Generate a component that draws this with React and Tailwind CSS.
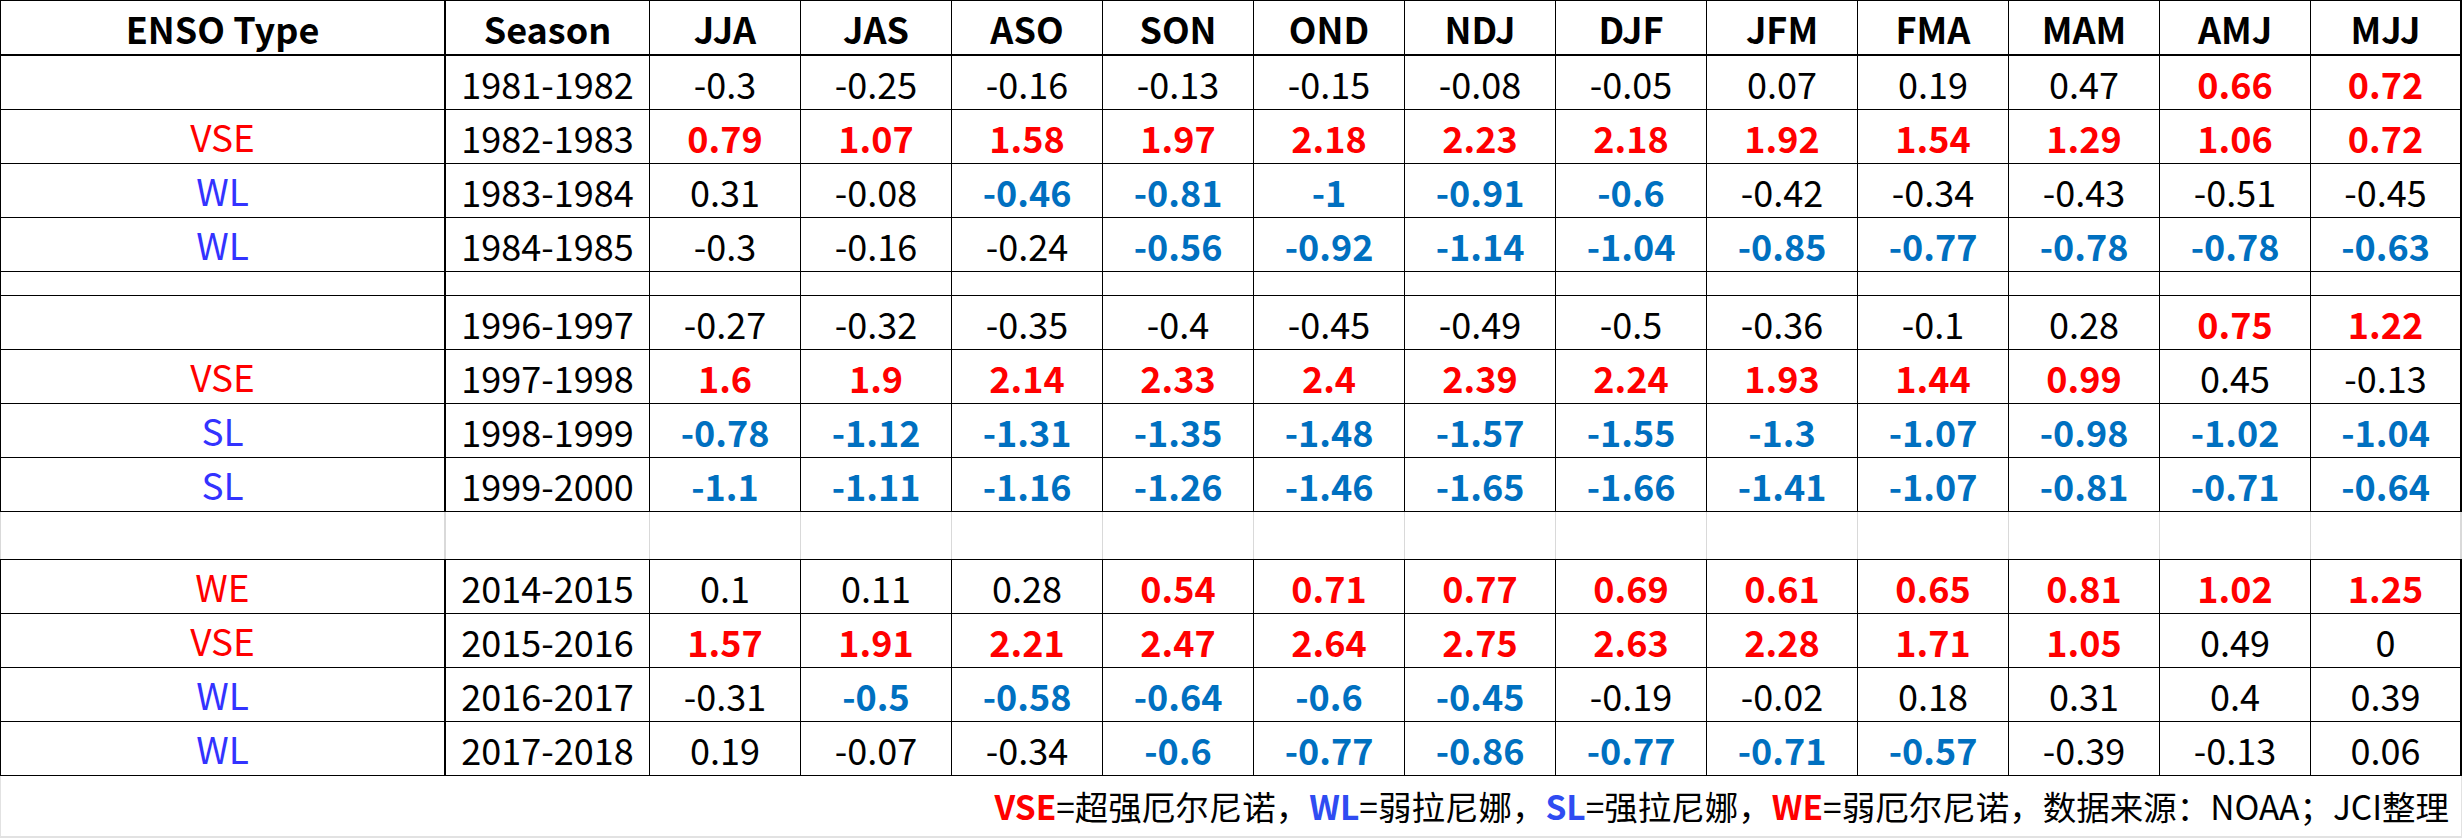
import React from "react";

const months = ["JJA", "JAS", "ASO", "SON", "OND", "NDJ", "DJF", "JFM", "FMA", "MAM", "AMJ", "MJJ"];

// k = black, r = red (bold), b = blue (bold)
const rows = [
  { type: "", season: "1981-1982", v: "-0.3 -0.25 -0.16 -0.13 -0.15 -0.08 -0.05 0.07 0.19 0.47 0.66 0.72", c: "kkkkkkkkkkrr" },
  { type: "VSE", season: "1982-1983", v: "0.79 1.07 1.58 1.97 2.18 2.23 2.18 1.92 1.54 1.29 1.06 0.72", c: "rrrrrrrrrrrr" },
  { type: "WL", season: "1983-1984", v: "0.31 -0.08 -0.46 -0.81 -1 -0.91 -0.6 -0.42 -0.34 -0.43 -0.51 -0.45", c: "kkbbbbbkkkkk" },
  { type: "WL", season: "1984-1985", v: "-0.3 -0.16 -0.24 -0.56 -0.92 -1.14 -1.04 -0.85 -0.77 -0.78 -0.78 -0.63", c: "kkkbbbbbbbbb" },
  "spacer",
  { type: "", season: "1996-1997", v: "-0.27 -0.32 -0.35 -0.4 -0.45 -0.49 -0.5 -0.36 -0.1 0.28 0.75 1.22", c: "kkkkkkkkkkrr" },
  { type: "VSE", season: "1997-1998", v: "1.6 1.9 2.14 2.33 2.4 2.39 2.24 1.93 1.44 0.99 0.45 -0.13", c: "rrrrrrrrrrkk" },
  { type: "SL", season: "1998-1999", v: "-0.78 -1.12 -1.31 -1.35 -1.48 -1.57 -1.55 -1.3 -1.07 -0.98 -1.02 -1.04", c: "bbbbbbbbbbbb" },
  { type: "SL", season: "1999-2000", v: "-1.1 -1.11 -1.16 -1.26 -1.46 -1.65 -1.66 -1.41 -1.07 -0.81 -0.71 -0.64", c: "bbbbbbbbbbbb" },
  "gap",
  { type: "WE", season: "2014-2015", v: "0.1 0.11 0.28 0.54 0.71 0.77 0.69 0.61 0.65 0.81 1.02 1.25", c: "kkkrrrrrrrrr" },
  { type: "VSE", season: "2015-2016", v: "1.57 1.91 2.21 2.47 2.64 2.75 2.63 2.28 1.71 1.05 0.49 0", c: "rrrrrrrrrrkk" },
  { type: "WL", season: "2016-2017", v: "-0.31 -0.5 -0.58 -0.64 -0.6 -0.45 -0.19 -0.02 0.18 0.31 0.4 0.39", c: "kbbbbbkkkkkk" },
  { type: "WL", season: "2017-2018", v: "0.19 -0.07 -0.34 -0.6 -0.77 -0.86 -0.77 -0.71 -0.57 -0.39 -0.13 0.06", c: "kkkbbbbbbkkk" },
];

const valueColor = {
  k: "text-black",
  r: "text-[#ff0000] font-bold",
  b: "text-[#0070c0] font-bold",
};

const typeColor = {
  VSE: "text-[#ff0000]",
  WE: "text-[#ff0000]",
  WL: "text-[#3333ff]",
  SL: "text-[#3333ff]",
};

function Cell({ className = "", children }) {
  return <div className={"flex shrink-0 items-center justify-center leading-none " + className}>{children}</div>;
}

function DataRow({ row }) {
  const vals = row.v.split(" ");
  return (
    <div className="flex h-[54px] border-b border-l border-black">
      <Cell className={"w-[445px] border-r-2 border-black text-[37px] " + (typeColor[row.type] || "")}>{row.type}</Cell>
      <Cell className="w-[204px] border-r border-black">{row.season}</Cell>
      {vals.map((v, i) => (
        <Cell
          key={i}
          className={"w-[151px] border-black " + (i === 11 ? "border-r-2 " : "border-r ") + valueColor[row.c[i]]}
        >
          {v}
        </Cell>
      ))}
    </div>
  );
}

function EmptyRow({ height, gray }) {
  const line = gray ? "border-[#d9d9d9]" : "border-black";
  return (
    <div className={"flex border-b border-black " + height}>
      <div className={"w-[446px] shrink-0 border-l border-r-2 " + line} />
      <div className={"w-[204px] shrink-0 border-r " + line} />
      {months.map((m, i) => (
        <div key={m} className={"w-[151px] shrink-0 " + (i === 11 ? "border-r-2 " : "border-r ") + line} />
      ))}
    </div>
  );
}

export default function App() {
  return (
    <div className="h-[838px] w-[2463px] bg-white font-['Noto_Sans_CJK_SC','Noto_Sans',sans-serif] text-[36px] text-black">
      <div className="w-[2462px]">
        {/* header */}
        <div className="flex h-[56px] border-t border-b-2 border-l border-black font-bold">
          <Cell className="w-[445px] border-r-2 border-black">ENSO Type</Cell>
          <Cell className="w-[204px] border-r border-black">Season</Cell>
          {months.map((m, i) => (
            <Cell key={m} className={"w-[151px] border-black " + (i === 11 ? "border-r-2" : "border-r")}>
              {m}
            </Cell>
          ))}
        </div>

        {rows.map((row, i) => {
          if (row === "spacer") return <EmptyRow key={i} height="h-[24px]" />;
          if (row === "gap") return <EmptyRow key={i} height="h-[48px]" gray />;
          return <DataRow key={i} row={row} />;
        })}

        {/* source note */}
        <div className="flex h-[62px] items-center justify-end border-b-2 border-l border-r border-[#e2e2e2] pr-[12px] text-[33.5px] leading-none">
          <span className="font-bold text-[#ff0000]">VSE</span>
          <span>=超强厄尔尼诺，</span>
          <span className="font-bold text-[#2f4cf2]">WL</span>
          <span>=弱拉尼娜，</span>
          <span className="font-bold text-[#2f4cf2]">SL</span>
          <span>=强拉尼娜，</span>
          <span className="font-bold text-[#ff0000]">WE</span>
          <span>=弱厄尔尼诺，数据来源：NOAA；JCI整理</span>
        </div>
      </div>
    </div>
  );
}
